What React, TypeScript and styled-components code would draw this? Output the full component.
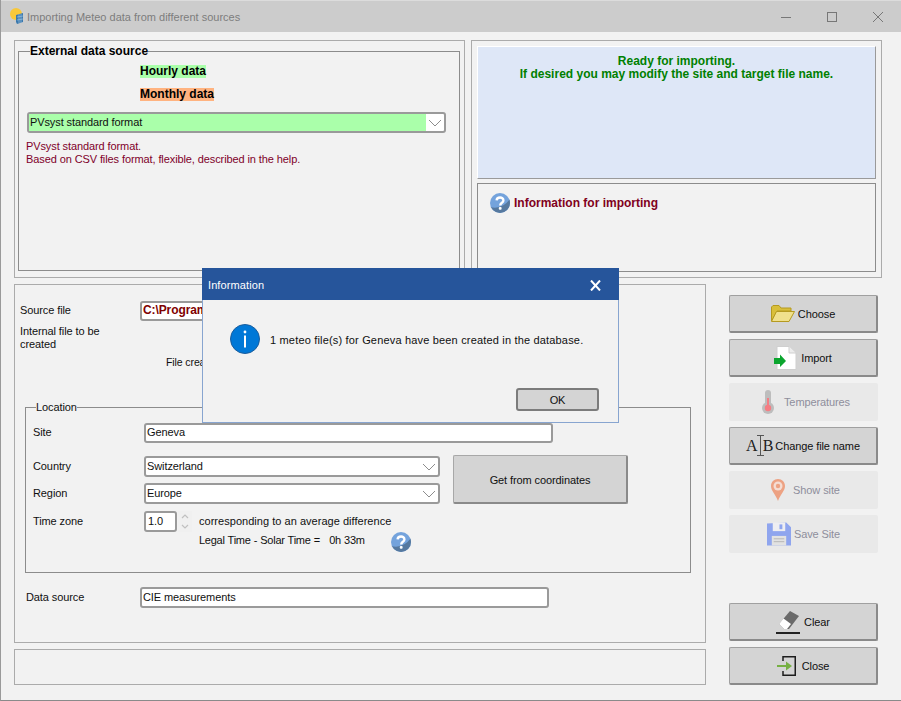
import React from "react";
import styled, { createGlobalStyle } from "styled-components";

const GlobalStyle = createGlobalStyle`
  html, body {
    margin: 0;
    padding: 0;
    background: #f2f2f2;
  }
  * {
    box-sizing: border-box;
  }
`;

const Window = styled.div`
  position: relative;
  width: 901px;
  height: 701px;
  overflow: hidden;
  display: flex;
  flex-direction: column;
  background: #f2f2f2;
  border-left: 1px solid #9a9a9a;
  border-bottom: 1px solid #8a8a8a;
  font-family: "Liberation Sans", Arial, sans-serif;
  font-size: 11px;
  letter-spacing: -0.1px;
  color: #101010;
`;

const TitleBar = styled.div`
  flex: none;
  height: 32px;
  display: flex;
  align-items: center;
  background: #cccccc;
  border-top: 1px solid #dcdcdc;
  padding-left: 9px;
`;

const TitleText = styled.span`
  margin-left: 3px;
  font-size: 11px;
  letter-spacing: 0;
  color: #7d7d7d;
`;

const WindowControls = styled.div`
  margin-left: auto;
  display: flex;
  align-items: center;
  gap: 36px;
  padding-right: 18px;
`;

const Content = styled.div`
  flex: 1;
  display: flex;
  flex-direction: column;
  padding: 8px 0 0 13px;
`;

const TopRow = styled.div`
  display: flex;
  gap: 6px;
  height: 238px;
`;

const Panel = styled.div<{ $width: number }>`
  width: ${(p) => p.$width}px;
  height: 100%;
  border: 1px solid #ababab;
  background: #f2f2f2;
`;

const SourcePanel = styled(Panel)`
  padding: 0 4px 5px 3px;
`;

const Group = styled.fieldset`
  margin: 0;
  min-width: 0;
  border: 1px solid #8c8c8c;
  padding: 0;
`;

const SourceGroup = styled(Group)`
  height: 226px;
  margin-top: 4px;
  padding: 0 0 0 8px;
`;

const GroupTitle = styled.legend`
  margin-left: 3px;
  padding: 0;
  font-weight: bold;
  font-size: 12px;
  letter-spacing: 0;
  line-height: 13px;
  color: #000;
`;

const DataTag = styled.div<{ $bg: string; $top: number }>`
  width: fit-content;
  margin: ${(p) => p.$top}px 0 0 113px;
  height: 13px;
  line-height: 13px;
  font-weight: bold;
  font-size: 12px;
  letter-spacing: 0;
  color: #000;
  background: ${(p) => p.$bg};
`;

const Combo = styled.div<{ $width: number; $top?: number }>`
  display: flex;
  align-items: center;
  width: ${(p) => p.$width}px;
  height: 21px;
  margin-top: ${(p) => p.$top ?? 0}px;
  border: 2px solid #9a9a9a;
  border-radius: 3px;
  background: #fff;
`;

const ComboText = styled.div<{ $bg?: string }>`
  flex: 1;
  height: 100%;
  padding-left: 1px;
  line-height: 16px;
  background: ${(p) => p.$bg ?? "transparent"};
`;

const ComboArrow = styled.div`
  flex: none;
  width: 18px;
  display: flex;
  justify-content: center;
`;

const SourceNote = styled.div`
  margin: 7px 0 0 -1px;
  line-height: 13px;
  color: #80002a;
`;

const StatusPanel = styled(Panel)`
  padding: 5px;
  display: flex;
  flex-direction: column;
  gap: 4px;
`;

const ReadyBox = styled.div`
  height: 133px;
  padding-top: 8px;
  background: #dee7f7;
  border: 1px solid #fff;
  border-right-color: #9a9a9a;
  border-bottom-color: #9a9a9a;
  text-align: center;
  font-weight: bold;
  font-size: 12px;
  letter-spacing: 0;
  line-height: 13px;
  color: #008000;
`;

const InfoBox = styled.div`
  flex: 1;
  display: flex;
  align-items: flex-start;
  gap: 4px;
  padding: 9px 0 0 12px;
  border: 1px solid #8c8c8c;
`;

const InfoTitle = styled.span`
  margin-top: 3px;
  font-weight: bold;
  font-size: 12px;
  letter-spacing: 0;
  line-height: 14px;
  color: #800020;
`;

const BottomRow = styled.div`
  display: flex;
  margin-top: 6px;
`;

const LeftColumn = styled.div`
  width: 692px;
  display: flex;
  flex-direction: column;
  gap: 6px;
`;

const FormPanel = styled.div`
  height: 359px;
  border: 1px solid #ababab;
  padding: 16px 0 0 5px;
`;

const Row = styled.div<{ $top?: number; $left?: number }>`
  display: flex;
  align-items: center;
  margin-top: ${(p) => p.$top ?? 0}px;
  margin-left: ${(p) => p.$left ?? 0}px;
`;

const Label = styled.div<{ $width: number; $lift?: boolean }>`
  flex: none;
  width: ${(p) => p.$width}px;
  line-height: 13px;
  margin-bottom: ${(p) => (p.$lift ? 2 : 0)}px;
`;

const TextField = styled.div<{ $width: number; $bold?: boolean }>`
  width: ${(p) => p.$width}px;
  height: 20px;
  border: 2px solid #9a9a9a;
  border-radius: 3px;
  background: #fff;
  padding-left: 1px;
  line-height: 15px;
  white-space: nowrap;
  overflow: hidden;
  font-weight: ${(p) => (p.$bold ? "bold" : "normal")};
  font-size: ${(p) => (p.$bold ? "12px" : "11px")};
  color: ${(p) => (p.$bold ? "#800000" : "#101010")};
`;

const DataField = styled(TextField)`
  height: 21px;
  line-height: 17px;
`;

const SmallNote = styled.div`
  margin: 5px 0 0 146px;
  font-size: 10.5px;
  line-height: 13px;
  white-space: nowrap;
`;

const LocationGroup = styled(Group)`
  width: 666px;
  height: 172px;
  margin: 32px 0 0 5px;
  padding: 0 0 0 7px;
`;

const LocationTitle = styled.legend`
  margin-left: 3px;
  padding: 0;
  line-height: 13px;
`;

const LocationGrid = styled.div`
  display: flex;
  gap: 13px;
  margin-top: 13px;
`;

const ComboStack = styled.div`
  display: flex;
  flex-direction: column;
  gap: 6px;
`;

const CoordsButton = styled.div`
  width: 175px;
  height: 49px;
  margin-top: -1px;
  padding-top: 2px;
  display: flex;
  align-items: center;
  justify-content: center;
  background: #d4d4d4;
  border: 1px solid #a8a8a8;
  border-right: 2px solid #8a8a8a;
  border-bottom: 2px solid #8a8a8a;
  border-radius: 2px;
`;

const SpinField = styled(TextField)`
  height: 21px;
  padding-left: 2px;
  line-height: 16px;
`;

const SpinArrows = styled.div`
  width: 14px;
  height: 21px;
  margin: 0 7px 0 1px;
  display: flex;
  align-items: center;
  justify-content: center;
  background: #f0f0f0;
`;

const ZoneText = styled.div`
  line-height: 13px;
  letter-spacing: 0.03px;
`;

const SolarRow = styled.div`
  display: flex;
  align-items: flex-start;
  margin: 0 0 0 166px;
`;

const SolarText = styled.div`
  width: 192px;
  margin-top: 2px;
  line-height: 13px;
  letter-spacing: -0.25px;
  word-spacing: 0.3px;
  white-space: pre;
`;

const StatusBar = styled.div`
  height: 36px;
  border: 1px solid #ababab;
`;

const ButtonColumn = styled.div`
  margin: 11px 0 0 23px;
  width: 149px;
  display: flex;
  flex-direction: column;
  gap: 6px;
`;

const ActionButton = styled.div<{ $disabled?: boolean; $push?: boolean; $gap?: number; $nudge?: number }>`
  height: 38px;
  display: flex;
  align-items: center;
  justify-content: center;
  gap: ${(p) => p.$gap ?? 3}px;
  margin-top: ${(p) => (p.$push ? 44 : 0)}px;
  padding-left: ${(p) => p.$nudge ?? 0}px;
  border-radius: 2px;
  background: ${(p) => (p.$disabled ? "#e9e9e9" : "#d4d4d4")};
  color: ${(p) => (p.$disabled ? "#8e8e9c" : "#101010")};
  ${(p) =>
    p.$disabled
      ? ""
      : `border: 1px solid #a0a0a0;
  border-right: 2px solid #8a8a8a;
  border-bottom: 2px solid #8a8a8a;`}
`;

const SerifLetters = styled.span`
  display: flex;
  align-items: center;
  font-family: "Liberation Serif", "Times New Roman", serif;
  font-size: 16px;
  letter-spacing: 0;
  color: #202020;

  svg {
    margin: 0 -2px;
  }
`;

const Dialog = styled.div`
  position: absolute;
  left: 201px;
  top: 268px;
  width: 417px;
  height: 155px;
  display: flex;
  flex-direction: column;
  background: #f2f2f2;
  border: 1px solid #88a5d0;
`;

const DialogTitle = styled.div`
  height: 32px;
  margin: -1px -1px 0;
  padding: 2px 18px 0 6px;
  display: flex;
  align-items: center;
  justify-content: space-between;
  background: #26559b;
  color: #fff;
  font-size: 11px;
  letter-spacing: 0.1px;
`;

const DialogBody = styled.div`
  display: flex;
  align-items: center;
  gap: 10px;
  margin-top: 24px;
  padding-left: 27px;
`;

const DialogText = styled.div`
  margin-top: 2px;
  font-size: 11px;
  letter-spacing: 0.175px;
  white-space: nowrap;
`;

const DialogFooter = styled.div`
  margin-top: auto;
  padding: 0 19px 11px 0;
  display: flex;
  justify-content: flex-end;
`;

const OkButton = styled.div`
  width: 83px;
  height: 23px;
  display: flex;
  align-items: center;
  justify-content: center;
  background: #d4d4d4;
  border: 2px solid #7c7c7c;
  border-radius: 3px;
`;

const Chevron = () => (
  <svg width="14" height="8" viewBox="0 0 14 8">
    <path d="M1 1 L7 7 L13 1" fill="none" stroke="#8d8d8d" strokeWidth="1" />
  </svg>
);

const HelpIcon = () => (
  <svg width="20" height="20" viewBox="0 0 20 20">
    <defs>
      <clipPath id="helpLower">
        <path d="M0 20 L20 20 L20 6 Q12 17 0 14 Z" />
      </clipPath>
    </defs>
    <circle cx="10" cy="10" r="10" fill="#74a3dc" />
    <circle cx="10" cy="10" r="10" fill="#56799f" clipPath="url(#helpLower)" />
    <path
      d="M6.6 7.4 C6.8 3.6 13.4 3.6 13.4 7.4 C13.4 9.8 10.2 9.8 10.2 12.4"
      fill="none"
      stroke="#fff"
      strokeWidth="2.4"
    />
    <rect x="8.8" y="14" width="2.8" height="2.8" rx="1" fill="#fff" />
  </svg>
);

const AppIcon = () => (
  <svg width="14" height="17" viewBox="0 0 14 17">
    <circle cx="6" cy="6" r="6" fill="#f8c83a" />
    <path d="M6 7 L13 5 L13 14 L7 16 L6 14 Z" fill="#3a78ad" />
    <path d="M7 9 L13 8 M7 12 L13 11 M9 6 L9 15 M11 6 L11 15" stroke="#a8cbe6" strokeWidth="0.6" />
  </svg>
);

const FolderIcon = () => (
  <svg width="24" height="17" viewBox="0 0 24 17">
    <path d="M0.5 16 L0.5 2 L2 0.5 L8 0.5 L10 3 L20 3 L20 6 L6 6 Z" fill="#d9bf3a" stroke="#b59a20" />
    <path d="M0.5 16.5 L5.5 6.5 L23.5 6.5 L18 16.5 Z" fill="#f0e08c" stroke="#b59a20" />
  </svg>
);

const ImportIcon = () => (
  <svg width="23" height="24" viewBox="0 0 23 24">
    <path d="M3 0.5 L15 0.5 L22 7 L22 23.5 L3 23.5 Z" fill="#fff" stroke="#cfcfcf" />
    <path d="M15 0.5 L15 7 L22 7" fill="#ececec" stroke="#cfcfcf" />
    <path d="M0 12 L6 12 L6 8.5 L12 15 L6 21 L6 18 L0 18 Z" fill="#0ba52e" />
  </svg>
);

const ThermometerIcon = () => (
  <svg width="12" height="24" viewBox="0 0 12 24">
    <rect x="3" y="0" width="6" height="16" rx="3" fill="#bdbdbd" />
    <circle cx="6" cy="18" r="6" fill="#bdbdbd" />
    <rect x="5" y="8" width="2" height="10" fill="#f57d83" />
    <circle cx="6" cy="18" r="3.2" fill="#f57d83" />
  </svg>
);

const IBeamIcon = () => (
  <svg width="9" height="21" viewBox="0 0 9 21">
    <path d="M1 0.5 L8 0.5 M4.5 0.5 L4.5 20.5 M1 20.5 L8 20.5" fill="none" stroke="#555" />
  </svg>
);

const PinIcon = () => (
  <svg width="14" height="22" viewBox="0 0 14 22">
    <path d="M7 22 C4.5 15 0 12 0 7 C0 3 3 0 7 0 C11 0 14 3 14 7 C14 12 9.5 15 7 22 Z" fill="#eda283" />
    <circle cx="7" cy="7" r="4.5" fill="#f5ddd3" />
    <circle cx="7" cy="7" r="2.2" fill="#eda283" />
  </svg>
);

const FloppyIcon = () => (
  <svg width="24" height="24" viewBox="0 0 25 24">
    <path d="M0 1 L20 0 L25 5 L25 24 L0 24 Z" fill="#8fa5ee" />
    <rect x="6" y="0" width="13" height="9" fill="#eeeef2" />
    <rect x="13" y="2" width="3" height="5" fill="#8fa5ee" />
    <rect x="5" y="14" width="15" height="10" fill="#e2e2e2" />
    <path d="M7 17 L18 17 M7 20 L18 20" stroke="#b5b5b5" />
  </svg>
);

const EraserIcon = () => (
  <svg width="24" height="24" viewBox="0 0 24 24">
    <path d="M3 14 L14 1 L23 6 L13 19 L8 19 Z" fill="#6a6a6a" />
    <path d="M3 14 L7.5 8.5 L15 14 L11 19 L8 19 Z" fill="#fff" />
    <rect x="0" y="22" width="24" height="2" fill="#222" />
  </svg>
);

const ExitIcon = () => (
  <svg width="19" height="20" viewBox="0 0 19 20">
    <path d="M6 5 L6 0.75 L18.25 0.75 L18.25 19.25 L6 19.25 L6 15" fill="none" stroke="#1d1d1d" strokeWidth="1.5" />
    <path d="M0 9 L9 9 L9 5.5 L15 10 L9 14.5 L9 11 L0 11 Z" fill="#76b043" />
  </svg>
);

const InfoIcon = () => (
  <svg width="30" height="30" viewBox="0 0 30 30">
    <circle cx="15" cy="15" r="14.5" fill="#0078d7" stroke="#1b5d9c" />
    <circle cx="15" cy="8" r="1.4" fill="#fff" />
    <rect x="14" y="11.5" width="2" height="12" fill="#fff" />
  </svg>
);

const App: React.FC = () => {
  return (
    <Window>
      <GlobalStyle />
      <TitleBar>
        <AppIcon />
        <TitleText>Importing Meteo data from different sources</TitleText>
        <WindowControls>
          <svg width="10" height="10" viewBox="0 0 10 10">
            <path d="M0 5.5 L10 5.5" stroke="#777" />
          </svg>
          <svg width="10" height="10" viewBox="0 0 10 10">
            <rect x="0.5" y="0.5" width="9" height="9" fill="none" stroke="#777" />
          </svg>
          <svg width="10" height="10" viewBox="0 0 10 10">
            <path d="M0 0 L10 10 M10 0 L0 10" stroke="#777" />
          </svg>
        </WindowControls>
      </TitleBar>
      <Content>
        <TopRow>
          <SourcePanel $width={451}>
            <SourceGroup>
              <GroupTitle>External data source</GroupTitle>
              <DataTag $bg="#aaffaa" $top={7}>Hourly data</DataTag>
              <DataTag $bg="#ffb380" $top={10}>Monthly data</DataTag>
              <Combo $width={419} $top={11}>
                <ComboText $bg="#aaffaa">PVsyst standard format</ComboText>
                <ComboArrow>
                  <Chevron />
                </ComboArrow>
              </Combo>
              <SourceNote>
                PVsyst standard format.
                <br />
                Based on CSV files format, flexible, described in the help.
              </SourceNote>
            </SourceGroup>
          </SourcePanel>
          <StatusPanel $width={411}>
            <ReadyBox>
              Ready for importing.
              <br />
              If desired you may modify the site and target file name.
            </ReadyBox>
            <InfoBox>
              <HelpIcon />
              <InfoTitle>Information for importing</InfoTitle>
            </InfoBox>
          </StatusPanel>
        </TopRow>
        <BottomRow>
          <LeftColumn>
            <FormPanel>
              <Row>
                <Label $width={120} $lift>Source file</Label>
                <TextField $width={412} $bold>C:\Program</TextField>
              </Row>
              <Row $top={4}>
                <Label $width={100}>Internal file to be created</Label>
              </Row>
              <SmallNote>File created</SmallNote>
              <LocationGroup>
                <LocationTitle>Location</LocationTitle>
                <Row $top={9}>
                  <Label $width={111} $lift>Site</Label>
                  <TextField $width={409}>Geneva</TextField>
                </Row>
                <LocationGrid>
                  <ComboStack>
                    <Row>
                      <Label $width={111}>Country</Label>
                      <Combo $width={296}>
                        <ComboText>Switzerland</ComboText>
                        <ComboArrow>
                          <Chevron />
                        </ComboArrow>
                      </Combo>
                    </Row>
                    <Row>
                      <Label $width={111}>Region</Label>
                      <Combo $width={296}>
                        <ComboText>Europe</ComboText>
                        <ComboArrow>
                          <Chevron />
                        </ComboArrow>
                      </Combo>
                    </Row>
                  </ComboStack>
                  <CoordsButton>Get from coordinates</CoordsButton>
                </LocationGrid>
                <Row $top={7}>
                  <Label $width={111}>Time zone</Label>
                  <SpinField $width={33}>1.0</SpinField>
                  <SpinArrows>
                    <svg width="8" height="15" viewBox="0 0 8 15">
                      <path d="M1 4 L4 1 L7 4 M1 11 L4 14 L7 11" fill="none" stroke="#c0c0c0" strokeWidth="1.2" />
                    </svg>
                  </SpinArrows>
                  <ZoneText>corresponding to an average difference</ZoneText>
                </Row>
                <SolarRow>
                  <SolarText>{"Legal Time - Solar Time =   0h 33m"}</SolarText>
                  <HelpIcon />
                </SolarRow>
              </LocationGroup>
              <Row $top={14} $left={6}>
                <Label $width={114}>Data source</Label>
                <DataField $width={409}>CIE measurements</DataField>
              </Row>
            </FormPanel>
            <StatusBar />
          </LeftColumn>
          <ButtonColumn>
            <ActionButton>
              <FolderIcon />
              Choose
            </ActionButton>
            <ActionButton $gap={4}>
              <ImportIcon />
              Import
            </ActionButton>
            <ActionButton $disabled $gap={10} $nudge={5}>
              <ThermometerIcon />
              Temperatures
            </ActionButton>
            <ActionButton $gap={2}>
              <SerifLetters>
                A
                <IBeamIcon />
                B
              </SerifLetters>
              Change file name
            </ActionButton>
            <ActionButton $disabled $gap={8} $nudge={4}>
              <PinIcon />
              Show site
            </ActionButton>
            <ActionButton $disabled>
              <FloppyIcon />
              Save Site
            </ActionButton>
            <ActionButton $push $gap={4}>
              <EraserIcon />
              Clear
            </ActionButton>
            <ActionButton $gap={6}>
              <ExitIcon />
              Close
            </ActionButton>
          </ButtonColumn>
        </BottomRow>
      </Content>
      <Dialog>
        <DialogTitle>
          Information
          <svg width="11" height="11" viewBox="0 0 11 11">
            <path d="M1 0.5 L10 10.5 M10 0.5 L1 10.5" stroke="#fff" strokeWidth="2" />
          </svg>
        </DialogTitle>
        <DialogBody>
          <InfoIcon />
          <DialogText>1 meteo file(s) for Geneva have been created in the database.</DialogText>
        </DialogBody>
        <DialogFooter>
          <OkButton>OK</OkButton>
        </DialogFooter>
      </Dialog>
    </Window>
  );
};

export default App;
